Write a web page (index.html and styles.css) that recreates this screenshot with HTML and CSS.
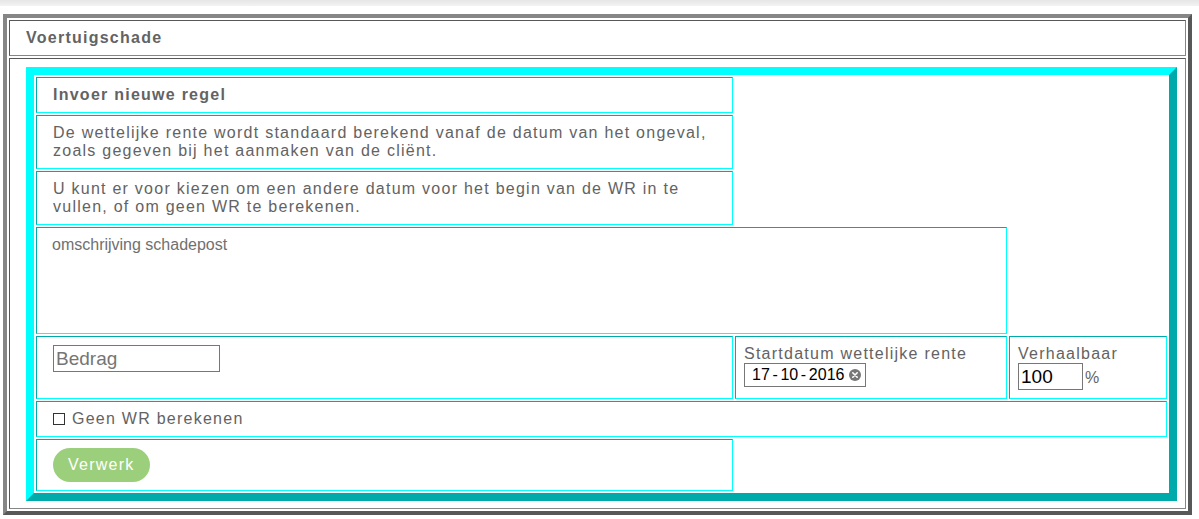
FILE: index.html
```html
<!DOCTYPE html>
<html lang="nl">
<head>
<meta charset="utf-8">
<title>Voertuigschade</title>
<link rel="stylesheet" href="styles.css">
</head>
<body>
<div class="topbar"></div>
<div class="frame">
  <div class="fcell fhead">Voertuigschade</div>
  <div class="fcell fbody">
    <div class="panel">
      <div class="pcell c1 title">Invoer nieuwe regel</div>
      <div class="pcell c1">De wettelijke rente wordt standaard berekend vanaf de datum van het ongeval, zoals gegeven bij het aanmaken van de cliënt.</div>
      <div class="pcell c1">U kunt er voor kiezen om een andere datum voor het begin van de WR in te vullen, of om geen WR te berekenen.</div>
      <div class="pcell wide2"><textarea class="omschrijving" placeholder="omschrijving schadepost"></textarea></div>
      <div class="pcell c1"><input class="bedrag" type="text" placeholder="Bedrag"></div>
      <div class="pcell c2">
        <div class="label">Startdatum wettelijke rente</div>
        <div class="datebox"><span class="datetext">17 - 10 - 2016</span><svg class="clear" width="12" height="12" viewBox="0 0 12 12"><circle cx="6" cy="6" r="6" fill="#777"/><path d="M3.8 3.8 L8.2 8.2 M8.2 3.8 L3.8 8.2" stroke="#fff" stroke-width="1.6" stroke-linecap="round"/></svg></div>
      </div>
      <div class="pcell c3">
        <div class="label">Verhaalbaar</div>
        <div class="pctrow"><input class="pct" type="text" value="100"><span class="pctsign">%</span></div>
      </div>
      <div class="pcell wide3"><label class="check"><span class="box"></span>Geen WR berekenen</label></div>
      <div class="pcell c1"><button class="verwerk" type="button">Verwerk</button></div>
    </div>
  </div>
</div>
</body>
</html>
```

FILE: styles.css
```css
body {
  margin: 0;
  background: #fff;
  font-family: "Liberation Sans", Arial, sans-serif;
  font-size: 16px;
  line-height: 18px;
  color: #636363;
  letter-spacing: 1.25px;
}

.topbar {
  height: 6px;
  background: linear-gradient(#e6e6e6, #f3f3f3);
}

.frame {
  margin: 8px 7px 0 3px;
  border: 4px solid;
  border-color: #868686 #585858 #585858 #868686;
  padding: 2px;
  display: flex;
  flex-direction: column;
  gap: 2px;
}

.fcell {
  border: 1px solid;
  border-color: #585858 #868686 #868686 #585858;
}

.fhead {
  padding: 8px 16px;
  font-weight: bold;
}

.fbody {
  padding: 8px 8px 7px 16px;
}

.panel {
  border: 8px solid;
  border-color: #00ffff #00aaaa #00aaaa #00ffff;
  padding: 2px;
  display: grid;
  grid-template-columns: 697px 272px 158px;
  gap: 2px;
}

.pcell {
  border: 1px solid;
  border-color: #00aaaa #00ffff #00ffff #00aaaa;
  padding: 8px;
}

.c1 {
  grid-column: 1;
  padding-left: 16px;
  padding-right: 16px;
}

.c2 {
  grid-column: 2;
}

.c3 {
  grid-column: 3;
}

.wide2 {
  grid-column: 1 / 3;
  padding: 0;
}

.wide3 {
  grid-column: 1 / 4;
  padding-left: 16px;
}

.title {
  font-weight: bold;
}

.omschrijving {
  display: block;
  box-sizing: border-box;
  width: 100%;
  height: 105px;
  margin: 0;
  padding: 8px 15px;
  border: none;
  outline: none;
  resize: none;
  background: transparent;
  font-family: "Liberation Sans", Arial, sans-serif;
  font-size: 16px;
  line-height: 18px;
  letter-spacing: 0;
  color: #333;
}

.omschrijving::placeholder {
  color: #707070;
}

.bedrag {
  display: block;
  box-sizing: border-box;
  width: 167px;
  height: 27px;
  margin: 0;
  padding: 0 2px;
  border: 1px solid #777;
  font-family: "Liberation Sans", Arial, sans-serif;
  font-size: 19px;
  letter-spacing: 0;
  color: #000;
}

.bedrag::placeholder {
  color: #757575;
}

.label {
  line-height: 18px;
}

.datebox {
  display: flex;
  align-items: center;
  justify-content: space-between;
  box-sizing: border-box;
  width: 122px;
  height: 24px;
  padding: 0 4px 0 7px;
  border: 1px solid #777;
}

.datetext {
  color: #000;
  letter-spacing: 0;
  word-spacing: -1.8px;
  font-size: 16px;
  white-space: nowrap;
}

.clear {
  display: block;
  flex: none;
}

.pctrow {
  display: flex;
  align-items: baseline;
}

.pct {
  box-sizing: border-box;
  width: 65px;
  height: 27px;
  margin: 0;
  padding: 0 2px;
  border: 1px solid #777;
  font-family: "Liberation Sans", Arial, sans-serif;
  font-size: 19px;
  letter-spacing: 0;
  color: #000;
}

.pctsign {
  margin-left: 2px;
  letter-spacing: 0;
}

.check {
  display: flex;
  align-items: center;
}

.box {
  box-sizing: border-box;
  width: 12px;
  height: 12px;
  border: 1px solid #333;
  margin-right: 7px;
  flex: none;
}

.verwerk {
  display: block;
  height: 34px;
  margin: 0;
  padding: 0 15px;
  border: none;
  border-radius: 17px;
  background: #9ccf7c;
  color: #fff;
  font-family: "Liberation Sans", Arial, sans-serif;
  font-size: 16px;
  letter-spacing: 1.25px;
  line-height: 18px;
}
```
